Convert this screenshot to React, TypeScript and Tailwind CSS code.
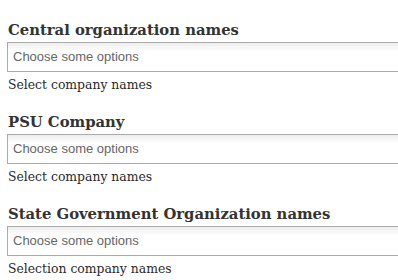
import React from "react";

const sections = [
  { title: "Central organization names", help: "Select company names" },
  { title: "PSU Company", help: "Select company names" },
  { title: "State Government Organization names", help: "Selection company names" },
];

export default function App() {
  return (
    <div className="w-[398px] h-[280px] overflow-hidden bg-white pl-[7px] pt-[20px]">
      {sections.map((s, i) => (
        <div key={i} className="mb-[18px]">
          <div className="font-['DejaVu_Serif',serif] text-[14.8px] leading-[20px] font-bold text-[#333] pl-[1px]">
            {s.title}
          </div>
          <div className="mt-[2px] w-[420px] h-[30px] border border-[#aaa] bg-linear-to-b from-[#eeeeee] from-0% to-white to-30% flex items-center pl-[5px]">
            <span className="font-['Liberation_Sans',Arial,sans-serif] text-[13px] text-[#666]">
              Choose some options
            </span>
          </div>
          <div className="mt-[4px] font-['DejaVu_Serif',serif] text-[12.4px] leading-[18px] text-[#2a2a2a] pl-[1px]">
            {s.help}
          </div>
        </div>
      ))}
    </div>
  );
}
